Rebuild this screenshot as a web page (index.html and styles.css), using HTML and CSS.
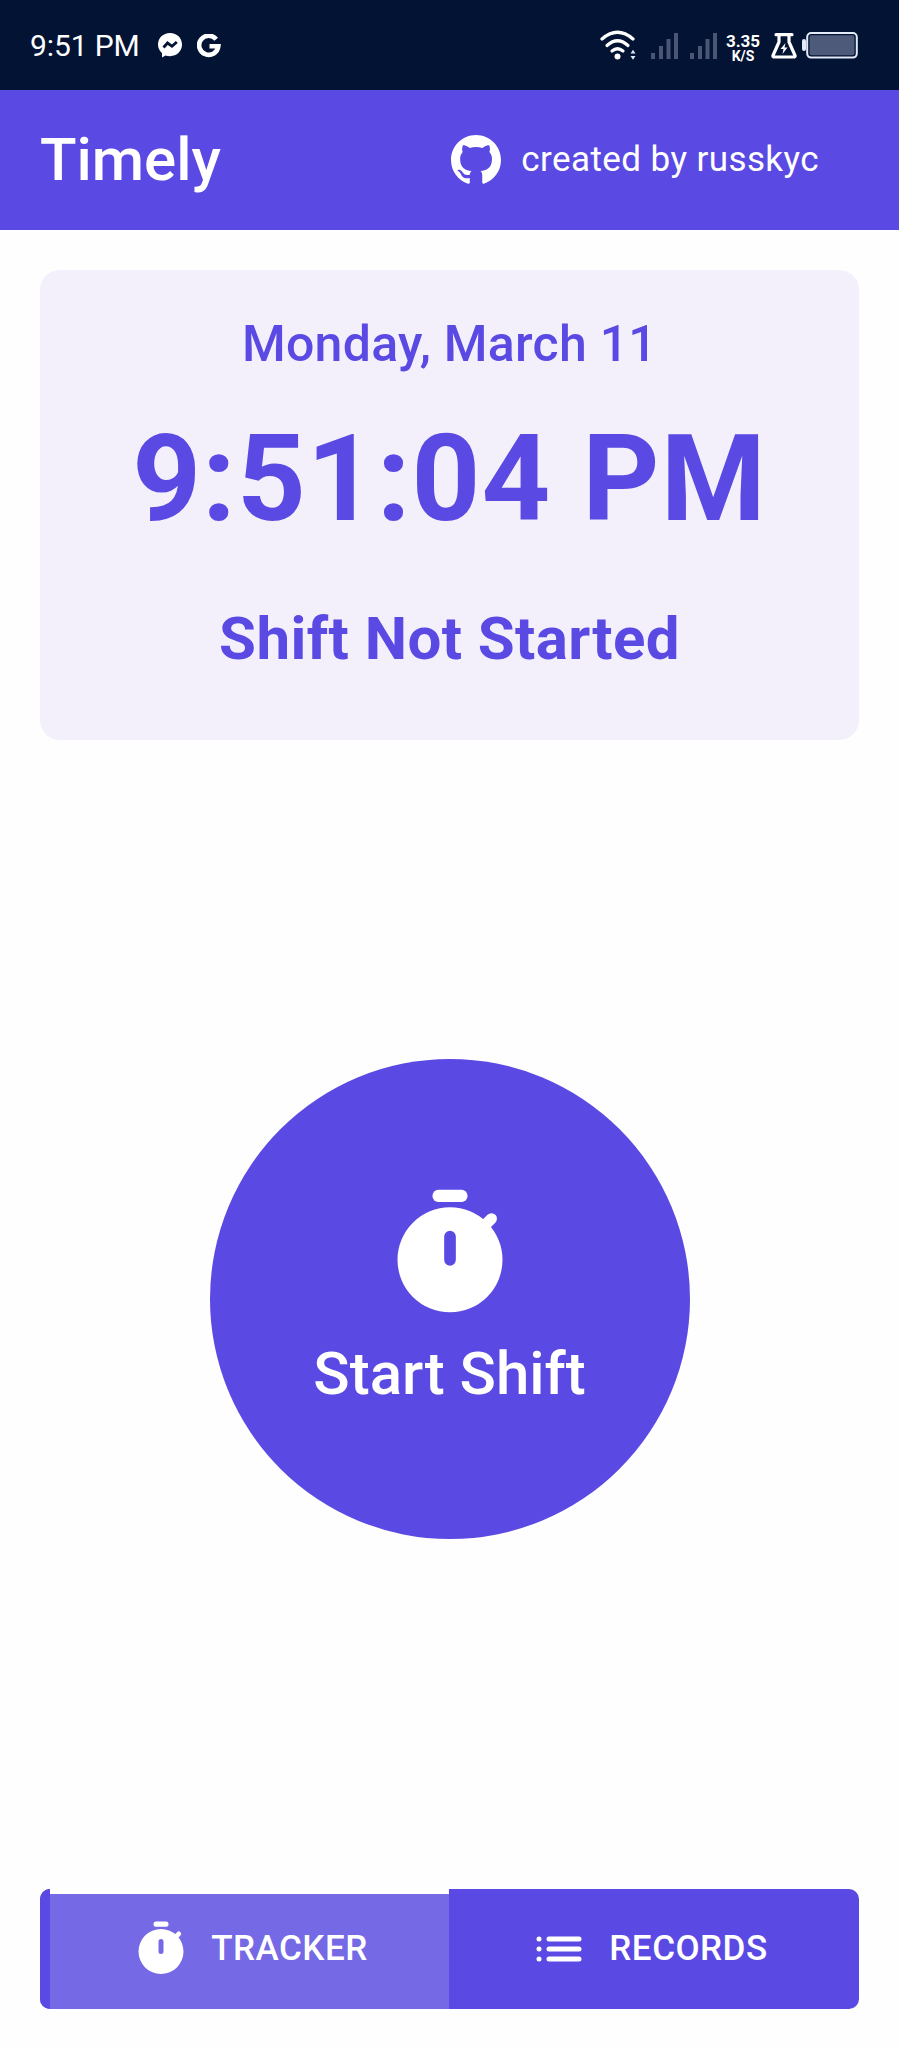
FILE: index.html
```html
<!DOCTYPE html>
<html lang="en">
<head>
<meta charset="utf-8">
<title>Timely</title>
<link rel="stylesheet" href="styles.css">
</head>
<body>
<svg class="defs" width="0" height="0" aria-hidden="true">
  <symbol id="timer" viewBox="0 0 24 24">
    <rect x="9" y="1" width="6" height="2.1" rx="1"/>
    <path d="M17 8 19.1 5.95" stroke="currentColor" stroke-width="1.9" stroke-linecap="round"/>
    <path fill-rule="evenodd" d="M12 4a9 9 0 1 0 0 18a9 9 0 0 0 0-18zM12 8a1 1 0 0 1 1 1v4a1 1 0 0 1-2 0V9a1 1 0 0 1 1-1z"/>
  </symbol>
</svg>
<div class="screen">
  <div class="statusbar">
    <span class="statusbar-time">9:51 PM</span>
    <svg class="messenger" viewBox="0 0 24 25"><path fill="#fff" d="M12 0C5 0 0 5 0 11.6c0 3.5 1.5 6.500 4 8.600V24.500l3.500-2c1.400.4 2.900.7 4.500.7 7 0 12-5 12-11.600S19 0 12 0z"/><path d="M5.500 14.500 9.500 10l4.500 3.300 4.800-4.300" fill="none" stroke="#021333" stroke-width="2.800"/></svg>
    <svg class="google" viewBox="0 0 24 24"><path d="M19.200 5.200A9.600 9.600 0 1 0 21.300 12.300H12.500" fill="none" stroke="#fff" stroke-width="4.600"/></svg>
    <div class="statusbar-right">
      <svg class="indicators" viewBox="0 0 120 32">
        <g fill="none" stroke="#fff" stroke-width="3.200" stroke-linecap="round">
          <path d="M2 9Q17.500-4.500 33 9"/><path d="M7 15.500Q17.500 6 28 15.500"/><path d="M12 21Q17.500 16.500 23 21"/>
        </g>
        <circle cx="17.500" cy="26.500" r="3" fill="#fff"/>
        <path d="M30.500 23.500h5l-2.500-3.700zM30.500 26h5l-2.500 3.700z" fill="#dfe7f5"/>
        <path d="M51 23h4v6h-4zM59 16h4v13h-4zM66.500 9h4v20h-4zM74 3h4v26h-4zM90 23h4v6h-4zM98 16h4v13h-4zM105.500 9h4v20h-4zM113 3h4v26h-4z" fill="#4a5674"/>
      </svg>
      <div class="speed"><span>3.35</span><span class="speed-unit">K/S</span></div>
      <svg class="flask" viewBox="0 0 26 26"><path d="M5 1.700h16M8 2v7L2 22.500q-.5 1.500 1.500 1.500h19q2 0 1.500-1.500L18 9V2" fill="none" stroke="#fff" stroke-width="3.200" stroke-linecap="round" stroke-linejoin="round"/><path d="M14.500 10 9.500 16h3L11.500 21l5-6.500h-3z" fill="#fff"/></svg>
      <svg class="battery" viewBox="0 0 56 27"><rect x="0" y="7" width="4" height="12" rx="2" fill="#e3ebf8"/><rect x="5.200" y="1" width="49.600" height="24.600" rx="4" fill="#021333" stroke="#e3ebf8" stroke-width="2"/><rect x="7.500" y="3.300" width="45" height="20" rx="2" fill="#4e5a7a"/></svg>
    </div>
  </div>
  <header class="appbar">
    <h1 class="title">Timely</h1>
    <div class="credit">
      <svg class="github" viewBox="0 0 16 16"><path fill="#fff" d="M8 0C3.580 0 0 3.580 0 8c0 3.540 2.290 6.530 5.470 7.590.4.070.55-.17.55-.38 0-.19-.01-.82-.01-1.490-2.010.37-2.530-.49-2.690-.94-.09-.23-.48-.94-.82-1.130-.28-.15-.68-.52-.01-.53.63-.01 1.080.58 1.230.82.72 1.210 1.870.87 2.330.66.070-.52.28-.87.51-1.070-1.780-.2-3.640-.89-3.640-3.950 0-.87.31-1.590.82-2.150-.08-.2-.36-1.020.08-2.120 0 0 .67-.21 2.200.82.640-.18 1.320-.27 2-.27s1.360.09 2 .27c1.530-1.040 2.200-.82 2.200-.82.44 1.100.16 1.920.08 2.120.51.56.82 1.270.82 2.150 0 3.070-1.870 3.750-3.650 3.950.29.25.54.73.54 1.480 0 1.070-.01 1.930-.01 2.200 0 .21.15.46.55.38A8.010 8.010 0 0 0 16 8c0-4.420-3.580-8-8-8z"/></svg>
      <span class="author">created by russkyc</span>
    </div>
  </header>
  <main class="content">
    <section class="card">
      <div class="date">Monday, March 11</div>
      <div class="clock">9:51:04 PM</div>
      <div class="shift">Shift Not Started</div>
    </section>
    <div class="stage">
      <button class="start"><svg class="start-icon"><use href="#timer"/></svg><span class="start-text">Start Shift</span></button>
    </div>
  </main>
  <nav class="tabs">
    <div class="tab-slot"><a class="tab tab-active"><svg class="tab-icon"><use href="#timer"/></svg><span class="tab-text">TRACKER</span></a></div>
    <a class="tab tab-records"><svg class="tab-icon" viewBox="0 0 24 24"><path d="M8 8h12M8 12h12M8 16h12M4 8h0M4 12h0M4 16h0" stroke="currentColor" stroke-width="2" stroke-linecap="round"/></svg><span class="tab-text">RECORDS</span></a>
  </nav>
</div>
</body>
</html>
```
FILE: styles.css
```css
* { box-sizing: border-box; }
body { margin: 0; background: #fefefe; font-family: Roboto, sans-serif; }
.defs { position: absolute; }
svg { display: block; flex: none; }
.screen { display: flex; flex-direction: column; width: 899px; height: 2048px; overflow: hidden; }
.statusbar { display: flex; align-items: center; height: 90px; padding: 1px 41px 0 30px; background: #021333; color: #fff; }
.statusbar-time { font-size: 30px; line-height: 36px; width: 128px; padding-top: 1px; letter-spacing: -0.1px; white-space: nowrap; }
.messenger { width: 24px; height: 25px; }
.google { width: 24px; height: 24px; margin-left: 15px; }
.statusbar-right { display: flex; align-items: center; margin-left: auto; }
.indicators { width: 120px; height: 32px; }
.speed { display: flex; flex-direction: column; align-items: center; width: 36px; margin: 4px 0 0 5px; font-size: 17px; font-weight: 700; line-height: 16px; }
.speed-unit { font-size: 14px; line-height: 14px; }
.flask { width: 26px; height: 26px; margin-left: 10px; }
.battery { width: 56px; height: 27px; margin-left: 5px; }
.appbar { display: flex; align-items: center; justify-content: space-between; height: 140px; padding: 0 80px 0 40px; background: #5a4ae3; color: #fff; }
.title { margin: 0; font-size: 60px; font-weight: 500; line-height: 80px; }
.credit { display: flex; align-items: center; gap: 20px; }
.github { width: 50px; height: 50px; }
.author { font-size: 35px; line-height: 50px; letter-spacing: 0.41px; }
.content { display: flex; flex: 1; flex-direction: column; padding: 40px 40px 0; }
.card { display: flex; flex-direction: column; align-items: center; height: 470px; border-radius: 20px; background: #f3f0fc; color: #5a4ae3; padding-top: 34px; }
.date { font-size: 50px; font-weight: 500; line-height: 80px; letter-spacing: 0.28px; }
.clock { font-size: 120px; font-weight: 700; line-height: 150px; margin-top: 20px; letter-spacing: 1.05px; }
.shift { font-size: 60px; font-weight: 700; line-height: 80px; margin-top: 45px; letter-spacing: 0.42px; }
.stage { display: flex; justify-content: center; padding-top: 319px; }
.start { display: flex; flex-direction: column; align-items: center; width: 480px; height: 480px; padding: 125px 0 0; border: 0; border-radius: 50%; background: #5a4ae3; color: #fff; font-family: inherit; }
.start-icon { width: 140px; height: 140px; fill: currentColor; }
.start-text { font-size: 60px; font-weight: 500; line-height: 80px; margin-top: 10px; }
.tabs { display: flex; width: 819px; height: 120px; margin: 0 40px 39px; overflow: hidden; border-radius: 10px; background: #5a4ae3; color: #fff; }
.tab-slot { width: 409px; padding-left: 10px; background: #5a4ae3; }
.tab { display: flex; align-items: center; justify-content: center; height: 120px; gap: 20px; }
.tab-active { background: #7569e5; border-top: 5px solid #fefefe; padding-bottom: 5px; }
.tab-records { flex: 1; padding-right: 11px; }
.tab-icon { width: 60px; height: 60px; fill: currentColor; }
.tab-text { font-size: 35px; font-weight: 500; line-height: 50px; letter-spacing: 0.5px; }
```
